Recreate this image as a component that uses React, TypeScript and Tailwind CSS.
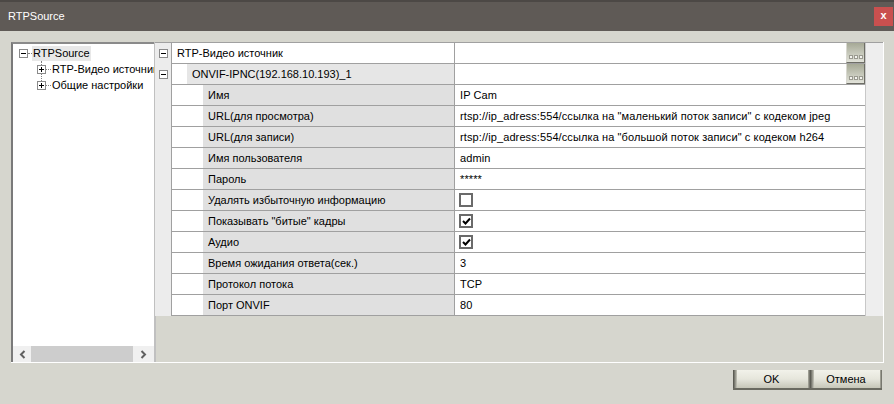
const font = { fontFamily: '"Liberation Sans", Arial, sans-serif' }

type Row = {
  label: string
  level: 0 | 1 | 2
  value?: string
  check?: boolean
  ellipsis?: boolean
}

const rows: Row[] = [
  { label: 'RTP-Видео источник', level: 0, ellipsis: true },
  { label: 'ONVIF-IPNC(192.168.10.193)_1', level: 1, ellipsis: true },
  { label: 'Имя', level: 2, value: 'IP Cam' },
  { label: 'URL(для просмотра)', level: 2, value: 'rtsp://ip_adress:554/ссылка на "маленький поток записи" с кодеком jpeg' },
  { label: 'URL(для записи)', level: 2, value: 'rtsp://ip_adress:554/ссылка на "большой поток записи" с кодеком h264' },
  { label: 'Имя пользователя', level: 2, value: 'admin' },
  { label: 'Пароль', level: 2, value: '*****' },
  { label: 'Удалять избыточную информацию', level: 2, check: false },
  { label: 'Показывать "битые" кадры', level: 2, check: true },
  { label: 'Аудио', level: 2, check: true },
  { label: 'Время ожидания ответа(сек.)', level: 2, value: '3' },
  { label: 'Протокол потока', level: 2, value: 'TCP' },
  { label: 'Порт ONVIF', level: 2, value: '80' },
]

function ExpandBox({ plus }: { plus?: boolean }) {
  return (
    <div className="relative w-[9px] h-[9px] border border-[#8a8a8a] bg-white shrink-0">
      <div className="absolute left-[1px] top-[3px] w-[5px] h-[1px] bg-black" />
      {plus && <div className="absolute left-[3px] top-[1px] w-[1px] h-[5px] bg-black" />}
    </div>
  )
}

function EllipsisButton() {
  return (
    <div className="w-[19px] h-[20px] flex items-end justify-center gap-[1px] pb-[3px] bg-gradient-to-b from-[#a6a996] to-[#e2e3da] border-r border-b border-[#6e6e66] border-l border-l-[#d8d8d0]">
      <div className="w-[4px] h-[4px] border border-[#9a9a90] bg-[#f4f4f0]" />
      <div className="w-[4px] h-[4px] border border-[#9a9a90] bg-[#f4f4f0]" />
      <div className="w-[4px] h-[4px] border border-[#9a9a90] bg-[#f4f4f0]" />
    </div>
  )
}

function CheckBox({ checked }: { checked: boolean }) {
  return (
    <div className="w-[14px] h-[14px] border-2 border-[#6a6a6a] bg-white flex items-center justify-center">
      {checked && (
        <svg width="9" height="8" viewBox="0 0 9 8">
          <path d="M1 4 L3.5 6.5 L8 1.5" stroke="#000" strokeWidth="2" fill="none" />
        </svg>
      )}
    </div>
  )
}

function GridRow({ row }: { row: Row }) {
  const indent = row.level === 0 ? 'w-0' : row.level === 1 ? 'w-[15px]' : 'w-[31px]'
  const labelBg = row.level === 0 ? 'bg-white' : row.level === 1 ? 'bg-[#e6e6e6]' : 'bg-[#e0e0e0]'
  return (
    <div className="flex h-[21px] border-b border-[#a0a0a0]">
      <div className={`${indent} bg-white shrink-0`} />
      <div className={`flex-1 ${labelBg} flex items-center pl-[5px] text-[11px] text-black whitespace-nowrap overflow-hidden`}>
        {row.label}
      </div>
      <div className="w-[411px] border-l border-[#a0a0a0] bg-white flex items-center text-[11px] text-black whitespace-nowrap overflow-hidden">
        {row.ellipsis ? (
          <div className="ml-auto">
            <EllipsisButton />
          </div>
        ) : row.check !== undefined ? (
          <div className="pl-[4px]">
            <CheckBox checked={row.check} />
          </div>
        ) : (
          <span className="pl-[5px] tracking-[0.1px]">{row.value}</span>
        )}
      </div>
    </div>
  )
}

function Tree() {
  return (
    <div className="w-[143px] h-full bg-white border-l-2 border-t-2 border-l-[#7a7a7a] border-t-[#8a8a8a] flex flex-col overflow-hidden">
      <div className="flex-1 pt-[2px] text-[11px] text-black relative overflow-hidden">
        <div className="flex items-center h-[15px]">
          <div className="w-[6px]" />
          <ExpandBox />
          <div className="w-[4px] border-t border-dotted border-[#808080]" />
          <span className="bg-[#e8e8e8] px-[1px] leading-[15px]">RTPSource</span>
        </div>
        <div className="absolute left-[28px] top-[17px] h-[22px] border-l border-dotted border-[#808080]" />
        {['RTP-Видео источник', 'Общие настройки'].map((t) => (
          <div key={t} className="flex items-center h-[16px] whitespace-nowrap">
            <div className="w-[24px] shrink-0" />
            <ExpandBox plus />
            <div className="w-[5px] border-t border-dotted border-[#808080] shrink-0" />
            <span className="pl-[1px] leading-[15px]">{t}</span>
          </div>
        ))}
      </div>
      <div className="h-[16px] flex items-center bg-[#f0f0f0] shrink-0">
        <div className="w-[18px] flex items-center justify-center">
          <svg width="7" height="9" viewBox="0 0 7 9">
            <path d="M5.5 1 L2 4.5 L5.5 8" stroke="#606060" strokeWidth="2" fill="none" />
          </svg>
        </div>
        <div className="w-[102px] h-full bg-[#cdcdcd]" />
        <div className="flex-1 flex items-center justify-center">
          <svg width="7" height="9" viewBox="0 0 7 9">
            <path d="M1.5 1 L5 4.5 L1.5 8" stroke="#606060" strokeWidth="2" fill="none" />
          </svg>
        </div>
      </div>
    </div>
  )
}

function DialogButton({ label }: { label: string }) {
  return (
    <div className="relative h-[20px] flex items-center justify-center bg-gradient-to-b from-[#f2f2ea] via-[#e6e6dc] to-[#c6c6b8] border-b-2 border-b-[#6a6a60] text-[11px] text-black">
      <div className="absolute left-0 top-0 bottom-0 w-[4px] bg-gradient-to-r from-[#4e4e46] to-[#c8c8bc]" />
      <div className="absolute right-0 top-0 bottom-0 w-[2px] bg-gradient-to-r from-[#b0b0a4] to-[#66665e]" />
      {label}
    </div>
  )
}

export default function App() {
  return (
    <div className="w-[894px] h-[404px] bg-[#d6d6ce] flex flex-col overflow-hidden" style={font}>
      <div className="h-[31px] bg-[#5f5a56] border-t-2 border-[#4c4845] flex items-center pl-[8px] shrink-0">
        <span className="text-white text-[11px]">RTPSource</span>
        <div className="ml-auto mr-[1px] w-[19px] h-[19px] bg-[#c9504f] flex items-center justify-center text-white text-[11px] font-bold leading-none pb-[2px]">
          x
        </div>
      </div>

      <div className="ml-[11px] mt-[11px] w-[873px] h-[321px] flex border-b border-r border-white shrink-0">
        <Tree />
        <div className="w-[1px] bg-[#c0c0c0]" />
        <div className="flex-1 flex flex-col">
          <div className="flex border-t border-[#a0a0a0]">
            <div className="w-[17px] bg-[#ececec] border-r border-[#a0a0a0] shrink-0 flex flex-col items-center pt-[6px] gap-[12px]">
              <ExpandBox />
              <ExpandBox />
            </div>
            <div className="flex-1 flex flex-col border-r border-[#c8c8c8]">
              {rows.map((r) => (
                <GridRow key={r.label} row={r} />
              ))}
            </div>
            <div className="w-[17px] bg-[#eeeeee] shrink-0" />
          </div>
          <div className="flex-1 border-l border-[#c0c0c0]" />
        </div>
      </div>

      <div className="flex justify-end mt-[7px] pr-[12px]">
        <div className="w-[77px]">
          <DialogButton label="OK" />
        </div>
        <div className="w-[72px]">
          <DialogButton label="Отмена" />
        </div>
      </div>
    </div>
  )
}
